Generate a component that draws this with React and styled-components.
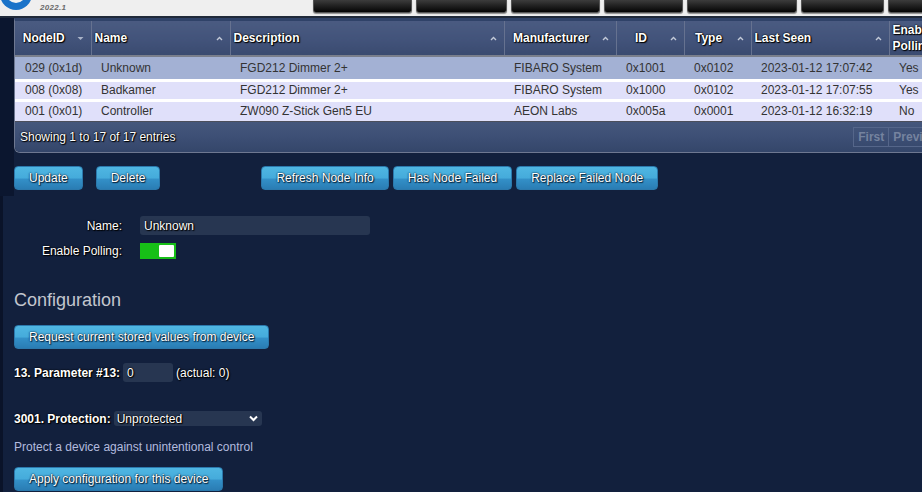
import React from 'react'
import styled, { createGlobalStyle } from 'styled-components'

const GlobalStyle = createGlobalStyle`
  html, body {
    margin: 0;
    padding: 0;
    background: #12203d;
    overflow: hidden;
    font-family: "Liberation Sans", Arial, sans-serif;
    font-size: 12px;
  }
  * { box-sizing: border-box; }
`

const shadow = '0 0 1px #000, 1px 1px 1px #000, 0 0 2px #000'

const Page = styled.div`
  width: 922px;
  min-height: 492px;
  overflow: hidden;
`

const TopBar = styled.header`
  height: 18px;
  background: #efefef;
  border-bottom: 2px solid #202a3a;
  display: flex;
  align-items: flex-start;
`

const Logo = styled.svg`
  width: 34px;
  height: 16px;
  flex: none;
`

const Version = styled.span`
  margin: 3px 0 0 6px;
  font-size: 8px;
  font-style: italic;
  font-weight: bold;
  color: #6a6a6a;
  letter-spacing: 0.3px;
`

const Tabs = styled.nav`
  display: flex;
  gap: 4px;
  margin-left: auto;
  width: 609px;
  flex: none;
`

const Tab = styled.div`
  width: ${p => p.$w}px;
  flex: none;
  height: 13px;
  background: linear-gradient(to bottom, #3c3c3c, #1a1a1a 60%, #050505);
  border: 1px solid #555;
  border-top: none;
  border-radius: 0 0 3px 3px;
  box-shadow: 0 1px 1px rgba(0,0,0,0.4);
`

const Upper = styled.section`
  background: linear-gradient(to right, #0b162f 14px, transparent 14px);
  padding: 0 0 6px 14px;
`

const Lower = styled.section`
  border-left: 3px solid #0a1329;
  padding: 20px 0 20px 11px;
`

const Panel = styled.div`
  width: 946px;
  border: 1px solid #6e7891;
  border-top: 3px solid #2f4268;
  border-radius: 0 0 6px 6px;
  overflow: hidden;
`

const Table = styled.table`
  width: 944px;
  table-layout: fixed;
  border-collapse: collapse;
`

const Th = styled.th`
  position: relative;
  height: 35px;
  padding: 0 ${p => (p.$align === 'center' ? '18px' : '14px')} 0 ${p => (p.$align === 'center' ? '0' : '3px')};
  text-align: ${p => p.$align || 'left'};
  font-size: 12px;
  font-weight: bold;
  line-height: 16px;
  color: #fff;
  text-shadow: ${shadow};
  background: linear-gradient(to bottom, #4a5b81, #42537a 55%, #3a4b70);
  border-right: 1px solid #667290;
  border-bottom: 2px solid #7a7f8c;
  white-space: ${p => (p.$wrap ? 'normal' : 'nowrap')};
  overflow: hidden;
  vertical-align: middle;
`

const SortIcon = styled.svg`
  position: absolute;
  right: 7px;
  top: 50%;
  width: 7px;
  height: 5px;
  margin-top: -2px;
`

const Row = styled.tr`
  background: ${p => (p.$selected ? '#a3b1d4' : '#e0e0fa')};
  border-top: ${p => (p.$first ? 'none' : '3px solid #fff')};
`

const Td = styled.td`
  height: ${p => p.$h}px;
  padding: 0 0 0 10px;
  font-size: 12px;
  color: #333;
  white-space: nowrap;
  overflow: hidden;
`

const Footer = styled.div`
  height: 31px;
  display: flex;
  align-items: center;
  padding: 0 0 0 5px;
  background: linear-gradient(to bottom, #45577c, #3d4f75 50%, #34466a);
  border-top: 1px solid #4c4f5c;
`

const FooterText = styled.span`
  color: #fff;
  text-shadow: ${shadow};
`

const Pager = styled.div`
  display: flex;
  margin-left: auto;
  margin-right: 10px;
`

const PageBtn = styled.span`
  height: 20px;
  line-height: 19px;
  padding: 0 4px;
  font-weight: bold;
  color: #75839f;
  border: 1px solid #55668a;
  border-left: ${p => (p.$first ? '1px solid #55668a' : 'none')};
`

const ActionRow = styled.div`
  display: flex;
  align-items: center;
  margin-top: 13px;
  gap: 13px;
`

const Group = styled.div`
  display: flex;
  gap: 4px;
  margin-left: ${p => p.$offset || 0}px;
`

const Button = styled.button`
  height: 24px;
  padding: 0 14px;
  border: 1px solid #2b79ad;
  border-radius: 4px;
  background: linear-gradient(to bottom, #4fb6e2 0%, #45abdb 50%, #3390c8 55%, #2a7db4 100%);
  color: #fff;
  font-family: "Liberation Sans", Arial, sans-serif;
  font-size: 12px;
  text-shadow: 0 0 1px #08263f, 1px 1px 1px #08263f, 0 0 2px #08263f;
  cursor: pointer;
  white-space: nowrap;
`

const Form = styled.div`
  display: grid;
  grid-template-columns: 108px 230px;
  column-gap: 18px;
  row-gap: 8px;
  align-items: center;
`

const Label = styled.label`
  text-align: right;
  color: #fff;
  text-shadow: ${shadow};
`

const TextInput = styled.input`
  width: ${p => p.$w}px;
  height: 19px;
  border: none;
  border-radius: 3px;
  background: #273651;
  color: #fff;
  padding: 0 4px;
  font-family: "Liberation Sans", Arial, sans-serif;
  font-size: 12px;
  text-shadow: ${shadow};
  outline: none;
`

const Toggle = styled.div`
  width: 36px;
  height: 16px;
  background: #17bf17;
  display: flex;
  justify-content: flex-end;
  align-items: center;
  padding: 2px;
`

const Knob = styled.span`
  width: 15px;
  height: 12px;
  background: #fff;
  border-radius: 1px;
`

const Heading = styled.h2`
  margin: 31px 0 14px;
  font-size: 18px;
  font-weight: normal;
  line-height: 21px;
  color: #c2c6ce;
`

const ParamRow = styled.div`
  display: flex;
  align-items: center;
  gap: 3px;
  margin-top: ${p => p.$mt || 0}px;
  color: #fff;
  text-shadow: ${shadow};
`

const ParamLabel = styled.span`
  font-weight: bold;
`

const SelectWrap = styled.div`
  position: relative;
  width: 148px;
  height: 15px;
  background: #273651;
  border-radius: 3px;
`

const Select = styled.select`
  appearance: none;
  width: 100%;
  height: 100%;
  border: none;
  background: transparent;
  color: #fff;
  padding: 0 0 0 3px;
  font-family: "Liberation Sans", Arial, sans-serif;
  font-size: 12px;
  text-shadow: ${shadow};
  outline: none;
`

const Chevron = styled.svg`
  position: absolute;
  right: 4px;
  top: 4px;
  width: 9px;
  height: 7px;
  pointer-events: none;
`

const Hint = styled.p`
  margin: 14px 0 13px;
  color: #b3bbdf;
  line-height: 14px;
`

const columns = [
  { label: 'NodeID', w: 76, align: 'center', sort: 'down' },
  { label: 'Name', w: 139 },
  { label: 'Description', w: 274 },
  { label: 'Manufacturer', w: 112, align: 'center' },
  { label: 'ID', w: 68, align: 'center' },
  { label: 'Type', w: 67, align: 'center' },
  { label: 'Last Seen', w: 138 },
  { label: 'Enable Polling', w: 70, wrap: true, sort: 'none' },
]

const nodes = [
  ['029 (0x1d)', 'Unknown', 'FGD212 Dimmer 2+', 'FIBARO System', '0x1001', '0x0102', '2023-01-12 17:07:42', 'Yes'],
  ['008 (0x08)', 'Badkamer', 'FGD212 Dimmer 2+', 'FIBARO System', '0x1000', '0x0102', '2023-01-12 17:07:55', 'Yes'],
  ['001 (0x01)', 'Controller', 'ZW090 Z-Stick Gen5 EU', 'AEON Labs', '0x005a', '0x0001', '2023-01-12 16:32:19', 'No'],
]

const rowHeights = [24, 20, 21]

const tabWidths = [99, 91, 89, 79, 110, 83, 40]

function Sort({ dir }) {
  if (dir === 'none') return null
  return (
    <SortIcon viewBox="0 0 7 5">
      {dir === 'down'
        ? <path d="M0.5 1 L6.5 1 L3.5 4 Z" fill="#aab4c8" />
        : <path d="M1 4 L3.5 1.5 L6 4" fill="none" stroke="#c3cad8" strokeWidth="1.4" />}
    </SortIcon>
  )
}

export default function App() {
  return (
    <Page>
      <GlobalStyle />
      <TopBar>
        <Logo viewBox="0 0 34 16">
          <circle cx="16" cy="-6" r="16" fill="#1a73c9" />
          <circle cx="16" cy="-7" r="10" fill="#f2f2f2" />
        </Logo>
        <Version>2022.1</Version>
        <Tabs>
          {tabWidths.map((w, i) => <Tab key={i} $w={w} />)}
        </Tabs>
      </TopBar>

      <Upper>
        <Panel>
          <Table>
            <colgroup>
              {columns.map(c => <col key={c.label} style={{ width: c.w }} />)}
            </colgroup>
            <thead>
              <tr>
                {columns.map(c => (
                  <Th key={c.label} $align={c.align} $wrap={c.wrap}>
                    {c.label}
                    <Sort dir={c.sort || 'up'} />
                  </Th>
                ))}
              </tr>
            </thead>
            <tbody>
              {nodes.map((n, i) => (
                <Row key={n[0]} $selected={i === 0} $first={i === 0}>
                  {n.map((v, j) => <Td key={j} $h={rowHeights[i]}>{v}</Td>)}
                </Row>
              ))}
            </tbody>
          </Table>
          <Footer>
            <FooterText>Showing 1 to 17 of 17 entries</FooterText>
            <Pager>
              <PageBtn $first>First</PageBtn>
              <PageBtn>Previous</PageBtn>
            </Pager>
          </Footer>
        </Panel>

        <ActionRow>
          <Group>
            <Button>Update</Button>
          </Group>
          <Group>
            <Button>Delete</Button>
          </Group>
          <Group $offset={88}>
            <Button>Refresh Node Info</Button>
            <Button>Has Node Failed</Button>
            <Button>Replace Failed Node</Button>
          </Group>
        </ActionRow>
      </Upper>

      <Lower>
        <Form>
          <Label>Name:</Label>
          <TextInput $w={230} defaultValue="Unknown" />
          <Label>Enable Polling:</Label>
          <Toggle><Knob /></Toggle>
        </Form>

        <Heading>Configuration</Heading>
        <Button>Request current stored values from device</Button>

        <ParamRow $mt={14}>
          <ParamLabel>13. Parameter #13:</ParamLabel>
          <TextInput $w={50} defaultValue="0" />
          <span>(actual: 0)</span>
        </ParamRow>

        <ParamRow $mt={29}>
          <ParamLabel>3001. Protection:</ParamLabel>
          <SelectWrap>
            <Select defaultValue="0">
              <option value="0">Unprotected</option>
              <option value="1">Protection by sequence</option>
              <option value="2">No operation possible</option>
            </Select>
            <Chevron viewBox="0 0 9 7">
              <path d="M1 1.5 L4.5 5 L8 1.5" fill="none" stroke="#fff" strokeWidth="2" />
            </Chevron>
          </SelectWrap>
        </ParamRow>

        <Hint>Protect a device against unintentional control</Hint>
        <Button>Apply configuration for this device</Button>
      </Lower>
    </Page>
  )
}
